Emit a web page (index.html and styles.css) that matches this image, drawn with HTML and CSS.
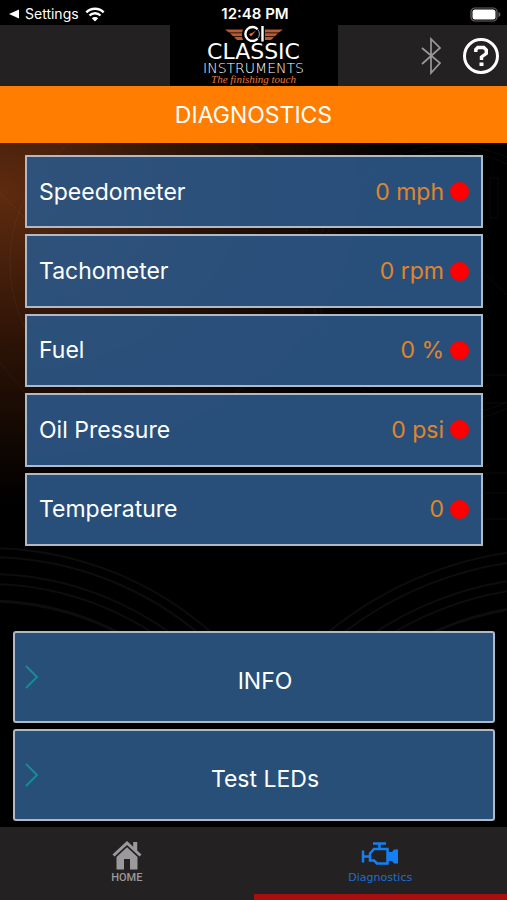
FILE: index.html
```html
<!DOCTYPE html>
<html lang="en">
<head>
<meta charset="utf-8">
<meta name="viewport" content="width=device-width, initial-scale=1">
<title>Diagnostics</title>
<link rel="stylesheet" href="styles.css">
</head>
<body>
<div class="status">
  <a class="back" href="#">
    <svg width="10" height="10" viewBox="0 0 10 10"><path d="M0 5 10 .5v9z" fill="#fff"/></svg>
    <span>Settings</span>
    <svg width="20" height="15" viewBox="0 0 20 15" fill="none" stroke="#fff" stroke-width="2.4"><path d="M1.300 5.300a12.300 12.300 0 0 1 17.400 0M4.500 8.500a7.800 7.800 0 0 1 11 0"/><path d="M10 14.500 6.800 11.300a4.500 4.500 0 0 1 6.400 0z" fill="#fff" stroke="none"/></svg>
  </a>
  <span class="clock">12:48 PM</span>
  <svg class="battery" width="31" height="15" viewBox="0 0 31 15"><rect x="1" y="1" width="26" height="13" rx="4" fill="none" stroke="#666" stroke-width="1.200"/><rect x="2.500" y="2.500" width="23" height="10" rx="2.500" fill="#fff"/><path d="M28.500 5c2.600 1 2.600 4 0 5z" fill="#666"/></svg>
</div>
<header class="header">
  <div class="logo">
    <svg width="60" height="17" viewBox="0 0 60 17">
      <g fill="#b95a35"><path d="M1 4.500h18l-1 3H5zM6 8.300h12v3H9zM10 12h8l1 3h-6z"/><path d="M59 4.500H41v3h14zM54 8.300H41v3h10zM50 12h-9v3h6z"/></g>
      <circle cx="28" cy="9" r="8.500" fill="#000"/>
      <path d="M33.500 4.200A7 7 0 1 0 33.500 13.800M38.500 1v15.500" fill="none" stroke="#fff" stroke-width="2.400"/>
      <path d="M33.500 4.200a7 7 0 0 1 0 9.600" fill="none" stroke="#aaa" stroke-width="1"/>
      <path d="m25 9 2 2.500 5-6-4 2.500z" fill="#ef6a2a"/>
    </svg>
    <span class="brand">CLASSIC</span>
    <span class="brand-sub">INSTRUMENTS</span>
    <span class="tagline">The finishing touch</span>
  </div>
  <div class="tools">
    <button class="tool" aria-label="Bluetooth"><svg width="20" height="38" viewBox="0 0 20 38" fill="none" stroke="#999" stroke-width="1.700"><path d="m1 11 18 15-9 10V2l9 9L1 27"/></svg></button>
    <button class="tool" aria-label="Help"><svg width="38" height="38" viewBox="0 0 38 38" fill="none" stroke="#fff"><circle cx="19" cy="19" r="16.500" stroke-width="3"/><path d="M13.800 15v-2.500l2-2h6l2.500 2.500v3.500L19.500 20v3" stroke-width="3.400"/><path d="M17.500 25.500h4v3.500h-4z" fill="#fff" stroke="none"/></svg></button>
  </div>
</header>
<h1 class="title">DIAGNOSTICS</h1>
<main class="main">
  <svg class="dials" viewBox="0 0 507 684" preserveAspectRatio="none" fill="none" stroke="#fff" aria-hidden="true">
    <g stroke-opacity=".05" stroke-width="2">
      <circle cx="-12" cy="742" r="337"/><circle cx="-12" cy="742" r="328"/><circle cx="-12" cy="742" r="311"/><circle cx="-12" cy="742" r="301"/><circle cx="-12" cy="742" r="284" stroke-width="3"/>
      <circle cx="560" cy="770" r="364"/><circle cx="560" cy="770" r="354"/><circle cx="560" cy="770" r="336"/><circle cx="560" cy="770" r="326"/><circle cx="560" cy="770" r="308" stroke-width="3"/>
    </g>
    <g stroke-opacity=".04">
      <circle cx="160" cy="120" r="150"/><circle cx="450" cy="140" r="138"/><circle cx="450" cy="140" r="132"/>
      <path d="m0 50 25 25M0 220l25 30M484 130l23 22M484 232h23M484 260h23M484 330h23M484 350h23M484 376h23M490 35v40h8V35z"/>
    </g>
  </svg>
  <ul class="gauges">
    <li class="gauge"><span>Speedometer</span><span class="value">0 mph</span><i class="led"></i></li>
    <li class="gauge"><span>Tachometer</span><span class="value">0 rpm</span><i class="led"></i></li>
    <li class="gauge"><span>Fuel</span><span class="value">0 %</span><i class="led"></i></li>
    <li class="gauge"><span>Oil Pressure</span><span class="value">0 psi</span><i class="led"></i></li>
    <li class="gauge"><span>Temperature</span><span class="value">0</span><i class="led"></i></li>
  </ul>
  <div class="actions">
    <button class="action"><svg class="chevron" width="14" height="24" viewBox="0 0 14 24"><path d="m1 1 11 11L1 23"/></svg><span>INFO</span></button>
    <button class="action"><svg class="chevron" width="14" height="24" viewBox="0 0 14 24"><path d="m1 1 11 11L1 23"/></svg><span>Test LEDs</span></button>
  </div>
</main>
<nav class="tabs">
  <a class="tab" href="#">
    <svg width="30" height="30" viewBox="0 0 30 30" fill="#9a9a9c"><path d="M15 1 .5 14.500l2 2L15 5l12.500 11.500 2-2-4.300-4V2h-4v4.700z"/><path d="M15 7.300 4.500 17v12.500H12V19h6v10.500h7.500V17z"/></svg>
    <span class="tab-label tab-home">HOME</span>
  </a>
  <a class="tab active" href="#">
    <svg width="38" height="30" viewBox="0 0 38 30" fill="none" stroke="#1380f5" stroke-width="2.500"><path d="M12 3.500h13M18.500 3.500V9M2 10.500v12M2 16.500h6"/><path d="M9 13.500 13 9h13.500v14.500H16l-3-3H9z"/><path d="M27 12h4l2-2.500h4v14h-4L31 21h-4z" fill="#1380f5" stroke="none"/></svg>
    <span class="tab-label">Diagnostics</span>
  </a>
</nav>
</body>
</html>
```
FILE: styles.css
```css
* { box-sizing: border-box; }

body {
  margin: 0;
  min-height: 100vh;
  display: flex;
  flex-direction: column;
  background: #000;
  color: #fff;
  font-family: Inter, "Liberation Sans", sans-serif;
}

button {
  padding: 0;
  border: 0;
  background: none;
  color: inherit;
  font: inherit;
}

a { color: inherit; text-decoration: none; }
svg { display: block; }

.status,
.header {
  display: grid;
  grid-template-columns: 1fr auto 1fr;
  align-items: center;
}

.status {
  height: 25px;
  padding: 3px 6px 0 9px;
  font-size: 15px;
  line-height: 20px;
}

.back { display: flex; align-items: center; gap: 6px; font-size: 14px; }
.clock { font-weight: 600; }
.battery { justify-self: end; }

.header {
  height: 61px;
  background: #242122;
}

.logo {
  grid-column: 2;
  width: 168px;
  height: 61px;
  display: flex;
  flex-direction: column;
  align-items: center;
  background: #000;
  font-family: "DejaVu Sans", sans-serif;
}

.brand { font-size: 22px; line-height: 20px; }
.brand-sub { font-size: 14px; font-weight: 200; line-height: 12px; }

.tagline {
  color: #e8763c;
  font: italic 11px/11px "Liberation Serif", serif;
}

.tools {
  display: flex;
  justify-content: flex-end;
  align-items: center;
  gap: 21px;
  padding-right: 7px;
}

.title {
  margin: 0;
  padding: 14px 0 13px;
  background: #ff7d00;
  font-size: 23px;
  font-weight: 400;
  line-height: 30px;
  text-align: center;
}

.main {
  position: relative;
  flex: 1;
  display: flex;
  flex-direction: column;
  gap: 85px;
  padding: 12px 12px 6px 13px;
  background: radial-gradient(ellipse 420px 310px at 0 50px, #5e2b0f, #2b1206 50%, #000);
}

.dials {
  position: absolute;
  inset: 0;
  width: 100%;
  height: 100%;
  clip-path: inset(0 0 28% 0);
}

.gauges {
  position: relative;
  flex: 1;
  display: grid;
  grid-auto-rows: 1fr;
  gap: 6px;
  margin: 0 12px;
  padding: 0;
  list-style: none;
}

.gauge {
  display: flex;
  align-items: center;
  padding: 0 12px;
  border: 2px solid #afbac6;
  background: rgba(43, 86, 132, .92);
  background-clip: padding-box;
  font-size: 23px;
  line-height: 30px;
}

.value { margin-left: auto; color: #e0852a; }

.led {
  width: 19px;
  height: 19px;
  margin-left: 6px;
  border-radius: 50%;
  background: #f00;
}

.actions {
  position: relative;
  display: grid;
  gap: 6px;
}

.action {
  display: grid;
  grid-template-columns: auto 1fr;
  gap: 8px;
  align-items: center;
  height: 92px;
  padding: 0 10px;
  border: 2px solid #afbac6;
  border-radius: 3px;
  background: #284f78;
  font-size: 23px;
  line-height: 30px;
}

.action span { padding-top: 7px; }
.chevron { fill: none; stroke: #168c94; stroke-width: 2; }

.tabs {
  display: grid;
  grid-template-columns: 1fr 1fr;
  background: #242122;
}

.tab {
  display: flex;
  flex-direction: column;
  align-items: center;
  height: 73px;
  padding-top: 13px;
  border-bottom: 6px solid transparent;
  color: #9a9a9c;
}

.tab-label { font: 11px/16px "DejaVu Sans", sans-serif; }
.tab-home { font-family: Roboto, sans-serif; font-weight: 500; }
.active { border-bottom-color: #a90d0d; color: #1d6fd0; }
```
